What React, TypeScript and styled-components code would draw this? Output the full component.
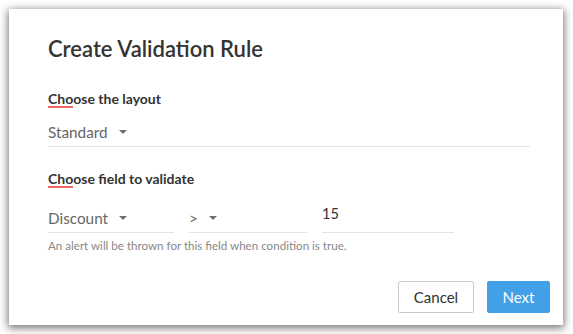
import React from 'react';
import styled, {createGlobalStyle} from 'styled-components';

const GlobalStyle = createGlobalStyle`
    html, body {
        margin: 0;
        padding: 0;
        background: #ffffff;
        font-family: Lato, "Open Sans", Arial, sans-serif;
    }`;

const Page = styled.div`
    padding: 9px 10px 9px 9px;`;

const Card = styled.div`
    width: 554px;
    height: 316px;
    box-sizing: border-box;
    background: #fff;
    box-shadow: 0 2px 8px 1px rgba(0, 0, 0, 0.55);
    padding: 27px 13px 0 39px;
    display: flex;
    flex-direction: column;`;

const Title = styled.h1`
    margin: 0;
    font-size: 22px;
    line-height: 26px;
    font-weight: 600;
    color: #333;`;

const SectionLabel = styled.div<{top: number}>`
    align-self: flex-start;
    margin-top: ${p => p.top}px;
    font-size: 14px;
    line-height: 17px;
    font-weight: 700;
    color: #333;
    position: relative;
    &:after {
        content: '';
        position: absolute;
        left: 0;
        bottom: -1px;
        width: 25px;
        height: 2px;
        background: #f0696a;
    }`;

const FieldLine = styled.div<{width?: number}>`
    display: flex;
    align-items: flex-end;
    width: ${p => p.width ? p.width + 'px' : 'auto'};
    padding-bottom: 5px;
    border-bottom: 1px solid #e4e4e4;
    font-size: 15.3px;
    line-height: 18px;
    color: #666;`;

const Caret = styled.span`
    display: inline-block;
    width: 0;
    height: 0;
    margin: 0 0 7px 11px;
    border-left: 4px solid transparent;
    border-right: 4px solid transparent;
    border-top: 4px solid #707070;`;

const LayoutField = styled(FieldLine)`
    margin: 16px 20px 0 0;`;

const ConditionRow = styled.div`
    display: flex;
    align-items: flex-end;
    gap: 15px;
    margin-top: 18px;`;

const ValueText = styled.span`
    color: #333;
    font-size: 14.5px;
    padding-bottom: 4px;`;

const Hint = styled.div`
    margin-top: 6px;
    font-size: 11.6px;
    line-height: 14px;
    color: #888;`;

const Footer = styled.div`
    margin-top: auto;
    margin-bottom: 12px;
    display: flex;
    justify-content: flex-end;
    gap: 13px;`;

const Button = styled.button<{primary?: boolean}>`
    height: 32px;
    box-sizing: border-box;
    padding: 0;
    width: ${p => p.primary ? 63 : 76}px;
    border-radius: 2px;
    font-family: inherit;
    font-size: 15px;
    cursor: pointer;
    border: 1px solid ${p => p.primary ? '#42a0e9' : '#c9c9c9'};
    background: ${p => p.primary ? '#42a0e9' : '#fff'};
    color: ${p => p.primary ? '#fff' : '#333'};`;

export default function App() {
    return (
        <Page>
            <GlobalStyle />
            <Card>
                <Title>Create Validation Rule</Title>
                <SectionLabel top={28}>Choose the layout</SectionLabel>
                <LayoutField>Standard<Caret /></LayoutField>
                <SectionLabel top={23}>Choose field to validate</SectionLabel>
                <ConditionRow>
                    <FieldLine width={126}>Discount<Caret /></FieldLine>
                    <FieldLine width={118}>&gt;<Caret /></FieldLine>
                    <FieldLine width={132}><ValueText>15</ValueText></FieldLine>
                </ConditionRow>
                <Hint>An alert will be thrown for this field when condition is true.</Hint>
                <Footer>
                    <Button>Cancel</Button>
                    <Button primary>Next</Button>
                </Footer>
            </Card>
        </Page>
    );
}
